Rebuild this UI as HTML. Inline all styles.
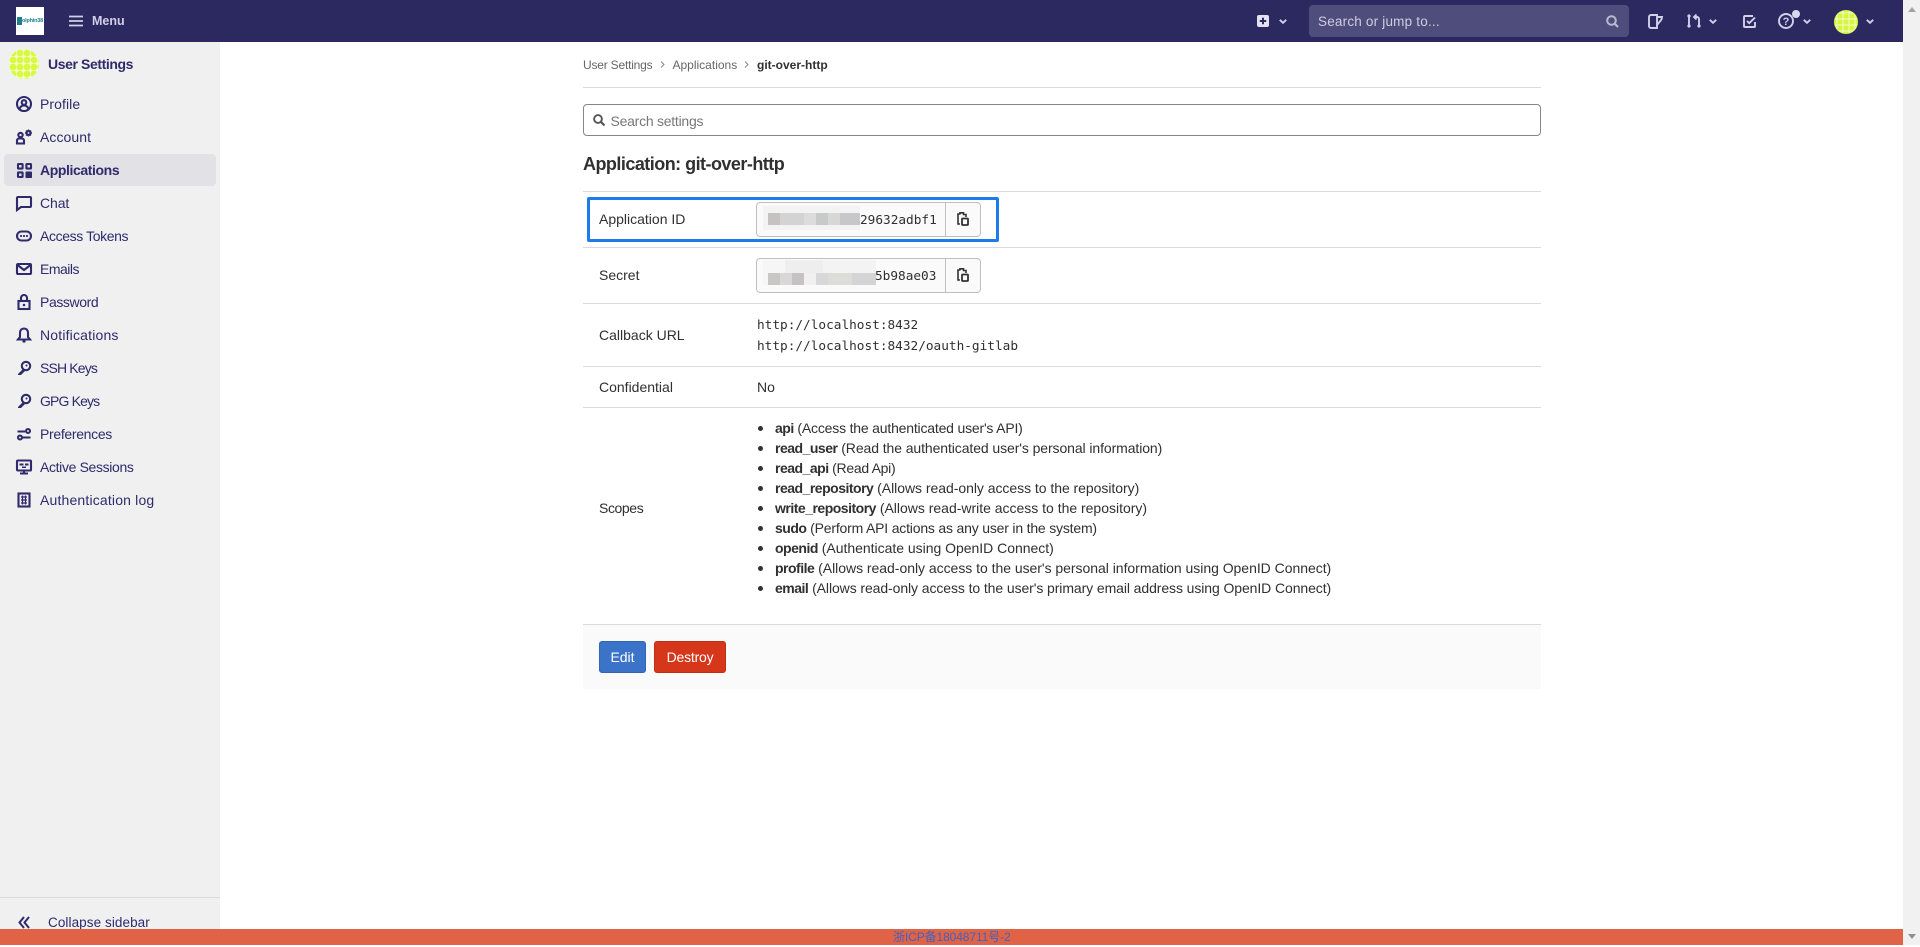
<!DOCTYPE html>
<html lang="en"><head><meta charset="utf-8"><title>git-over-http</title>
<style>
*{box-sizing:border-box}
html,body{margin:0;padding:0;width:1920px;height:945px;overflow:hidden;background:#fff;font-family:"Liberation Sans","Noto Sans CJK SC",sans-serif;font-size:14px;color:#303030}
.a{position:absolute}
.t{position:absolute;white-space:nowrap;line-height:20px;height:20px}
.m{font-family:"DejaVu Sans Mono","Liberation Mono",monospace;font-size:12.75px;color:#303030}
.hr{position:absolute;left:583px;width:958px;height:1px;background:#dbdbdb}
.nav{color:#2f2a6b;left:40px}
svg{position:absolute;display:block;overflow:visible}
.i{fill:none;stroke:#2f2a6b;stroke-width:2.1}
.n{fill:none;stroke:#d1d0e9;stroke-width:1.9}
.field{position:absolute;left:756px;width:225px;height:35px;border:1px solid #bfbfbf;border-radius:4px;background:#fafafa}
.field:after{content:"";position:absolute;left:188px;top:0;bottom:0;width:1px;background:#bfbfbf}
.b{position:absolute}
.s{left:775px;letter-spacing:-.09px}
.s b{letter-spacing:-.5px}
.d{position:absolute;left:758px;width:5px;height:5px;border-radius:50%;background:#303030}
</style></head><body>

<!-- navbar -->
<div class="a" style="left:0;top:0;width:1903px;height:42px;background:#2b2960"></div>
<div class="a" style="left:16px;top:7px;width:28px;height:28px;background:#fff;overflow:hidden"><div class="a" style="left:1px;top:10px;width:5px;height:8px;background:#1f7f8f"></div><span class="a" style="left:6px;top:9px;font-size:5.500px;line-height:10px;font-weight:bold;color:#1f7f8f;letter-spacing:-.2px;white-space:nowrap">olphin38</span></div>
<svg style="left:69px;top:14px" width="14" height="14" viewBox="0 0 14 14"><path d="M0 2.500h14M0 7h14M0 11.500h14" stroke="#d1d0e9" stroke-width="1.800"/></svg>
<div class="t" style="left:92px;top:11px;color:#d1d0e9;font-weight:bold;font-size:12.500px">Menu</div>

<svg style="left:1257px;top:15px" width="12" height="12" viewBox="0 0 12 12"><rect width="12" height="12" rx="2" fill="#e3e2f2"/><path d="M6 2.800v6.400M2.800 6h6.400" stroke="#2b2960" stroke-width="2"/></svg>
<svg style="left:1279px;top:19px" width="8" height="5" viewBox="0 0 8 5"><path d="M.8.800 4 3.800 7.200.800" class="n"/></svg>
<div class="a" style="left:1309px;top:5px;width:320px;height:32px;border-radius:4px;background:#4f4d7c"></div>
<div class="t" style="left:1318px;top:12px;color:#cfcee0;font-size:13.500px;letter-spacing:.2px">Search or jump to...</div>
<svg style="left:1606px;top:15px" width="13" height="13" viewBox="0 0 13 13"><circle cx="5.500" cy="5.500" r="4.300" fill="none" stroke="#b9b8d0" stroke-width="2"/><path d="M8.700 8.700 12 12" stroke="#b9b8d0" stroke-width="2.200"/></svg>
<svg style="left:1648px;top:14px" width="15" height="15" viewBox="0 0 15 15"><path d="M3 1h6v13H3a2 2 0 0 1-2-2V3a2 2 0 0 1 2-2zM9 3h5l-.5 2.500L9 11" class="n"/></svg>
<svg style="left:1686px;top:13px" width="16" height="16" viewBox="0 0 16 16"><path d="M3 3v10M13 12V6a2 2 0 0 0-2-2H9M10.500 1.500 8 4l2.500 2.500" class="n"/><circle cx="3" cy="3" r="1.600" fill="#d1d0e9"/><circle cx="3" cy="13" r="1.600" fill="#d1d0e9"/><circle cx="13" cy="13" r="1.600" fill="#d1d0e9"/></svg>
<svg style="left:1709px;top:19px" width="8" height="5" viewBox="0 0 8 5"><path d="M.8.800 4 3.800 7.200.800" class="n"/></svg>
<svg style="left:1743px;top:15px" width="13" height="13" viewBox="0 0 13 13"><path d="M10 1H1.800a.8.800 0 0 0-.8.800v9.400a.8.800 0 0 0 .8.800h9.400a.8.800 0 0 0 .8-.8V7" class="n"/><path d="M4 6l2.200 2.200L12 2.500" class="n"/></svg>
<svg style="left:1778px;top:13px" width="16" height="16" viewBox="0 0 16 16"><circle cx="8" cy="8" r="7" class="n"/><text x="8" y="12" text-anchor="middle" font-size="11" font-weight="bold" fill="#d1d0e9" font-family="Liberation Sans">?</text></svg>
<div class="a" style="left:1792px;top:10px;width:8px;height:8px;border-radius:50%;background:#d8d7ee"></div>
<svg style="left:1803px;top:19px" width="8" height="5" viewBox="0 0 8 5"><path d="M.8.800 4 3.800 7.200.800" class="n"/></svg>
<svg style="left:1834px;top:10px" width="24" height="24" viewBox="0 0 24 24"><defs><pattern id="p2" width="6" height="6" patternUnits="userSpaceOnUse"><rect width="6" height="6" fill="#d6f53c"/><path d="M2.500 0h1v6h-1zM0 2.500h6v1H0z" fill="#f4fbd0"/></pattern></defs><circle cx="12" cy="12" r="12" fill="url(#p2)"/></svg>
<svg style="left:1866px;top:19px" width="8" height="5" viewBox="0 0 8 5"><path d="M.8.800 4 3.800 7.200.800" class="n"/></svg>

<!-- scrollbar -->
<div class="a" style="left:1903px;top:0;width:17px;height:945px;background:#f1f1f1"></div>
<svg style="left:1908px;top:7px" width="8" height="5" viewBox="0 0 8 5"><path d="M4 0 8 5H0z" fill="#a3a3a3"/></svg>
<svg style="left:1908px;top:934px" width="8" height="5" viewBox="0 0 8 5"><path d="M0 0h8L4 5z" fill="#8f8f8f"/></svg>

<!-- sidebar -->
<div class="a" style="left:0;top:42px;width:220px;height:887px;background:#f0f0f0"></div>
<svg style="left:9px;top:49px" width="30" height="30" viewBox="0 0 30 30"><defs><pattern id="p1" x="0.500" y="0.500" width="7" height="7" patternUnits="userSpaceOnUse"><rect width="7" height="7" fill="#f3fbc8"/><circle cx="3.500" cy="3.500" r="3.300" fill="#d8fa3c"/></pattern></defs><circle cx="15" cy="15" r="15" fill="url(#p1)"/></svg>
<div class="t" style="left:48px;top:54px;color:#2f2a6b;font-weight:bold;font-size:14px;letter-spacing:-.4px">User Settings</div>

<div class="a" style="left:4px;top:154px;width:212px;height:32px;border-radius:4px;background:#e1e1e6"></div>

<svg style="left:16px;top:96px" width="16" height="16" viewBox="0 0 16 16"><circle cx="8" cy="8" r="7" class="i"/><circle cx="8" cy="6.500" r="2.300" class="i"/><path d="M3.500 13c.8-2.500 2.500-3.500 4.500-3.500s3.700 1 4.500 3.500" class="i"/></svg>
<div class="t nav" style="top:94px;letter-spacing:.07px">Profile</div>

<svg style="left:16px;top:129px" width="16" height="16" viewBox="0 0 16 16"><circle cx="4.500" cy="6" r="2.200" class="i"/><path d="M1 14.500v-3a2 2 0 0 1 2-2h3a2 2 0 0 1 2 2v3z" class="i"/><circle cx="12.500" cy="4" r="2" fill="none" stroke="#2f2a6b" stroke-width="2.200"/><path d="M12.500 .5v1M12.500 6.500v1M9 4h1M15 4h1M10 1.500l.7.7M14.300 5.800l.7.7M15 1.500l-.7.7M10.700 5.800l-.7.7" stroke="#2f2a6b" stroke-width="1.300"/></svg>
<div class="t nav" style="top:127px;letter-spacing:.07px">Account</div>

<svg style="left:17px;top:163px" width="15" height="15" viewBox="0 0 15 15"><g class="i"><rect x="1" y="1" width="4.600" height="4.600" rx=".6"/><rect x="9.400" y="1" width="4.600" height="4.600" rx=".6"/><rect x="1" y="9.400" width="4.600" height="4.600" rx=".6"/></g><rect x="8.500" y="8.500" width="6.500" height="6.500" rx=".8" fill="#2f2a6b"/></svg>
<div class="t nav" style="top:160px;font-weight:bold;letter-spacing:-.4px">Applications</div>

<svg style="left:16px;top:195px" width="16" height="16" viewBox="0 0 16 16"><path d="M2 2h12a1 1 0 0 1 1 1v8a1 1 0 0 1-1 1H5l-4 3V3a1 1 0 0 1 1-1z" class="i"/></svg>
<div class="t nav" style="top:193px;letter-spacing:-.1px">Chat</div>

<svg style="left:16px;top:228px" width="16" height="16" viewBox="0 0 16 16"><rect x="1" y="3.500" width="14" height="9" rx="4.500" class="i"/><circle cx="5" cy="8" r="1.100" fill="#2f2a6b"/><circle cx="8" cy="8" r="1.100" fill="#2f2a6b"/><circle cx="11" cy="8" r="1.100" fill="#2f2a6b"/></svg>
<div class="t nav" style="top:226px;letter-spacing:-.38px">Access Tokens</div>

<svg style="left:16px;top:261px" width="16" height="16" viewBox="0 0 16 16"><rect x="1" y="3" width="14" height="10" rx="1" class="i"/><path d="M1.500 4 8 9l6.500-5" class="i"/></svg>
<div class="t nav" style="top:259px;letter-spacing:-.5px">Emails</div>

<svg style="left:16px;top:294px" width="16" height="16" viewBox="0 0 16 16"><rect x="2.500" y="7" width="11" height="8" class="i"/><path d="M5 7V4a3 3 0 0 1 6 0v3" class="i"/><circle cx="8" cy="11" r="1.300" fill="#2f2a6b"/></svg>
<div class="t nav" style="top:292px;letter-spacing:-.4px">Password</div>

<svg style="left:16px;top:327px" width="16" height="16" viewBox="0 0 16 16"><path d="M8 1.500a4 4 0 0 0-4 4V10l-2 2.500h12L12 10V5.500a4 4 0 0 0-4-4z" class="i"/><path d="M6.500 14.500h3" class="i"/></svg>
<div class="t nav" style="top:325px;letter-spacing:.18px">Notifications</div>

<svg style="left:16px;top:360px" width="16" height="16" viewBox="0 0 16 16"><circle cx="10" cy="6" r="4.200" class="i"/><circle cx="10.500" cy="5.500" r="1" fill="#2f2a6b"/><path d="M7 9 2 14v1h3l4-4" fill="#2f2a6b"/></svg>
<div class="t nav" style="top:358px;letter-spacing:-.85px">SSH Keys</div>

<svg style="left:16px;top:393px" width="16" height="16" viewBox="0 0 16 16"><circle cx="10" cy="6" r="4.200" class="i"/><circle cx="10.500" cy="5.500" r="1" fill="#2f2a6b"/><path d="M7 9 2 14v1h3l4-4" fill="#2f2a6b"/></svg>
<div class="t nav" style="top:391px;letter-spacing:-.85px">GPG Keys</div>

<svg style="left:16px;top:426px" width="16" height="16" viewBox="0 0 16 16"><path d="M1.500 5.500H9M6.500 11.500h8" class="i"/><circle cx="12" cy="5" r="2" class="i"/><circle cx="4" cy="11.500" r="2" class="i"/></svg>
<div class="t nav" style="top:424px;letter-spacing:-.32px">Preferences</div>

<svg style="left:16px;top:459px" width="16" height="16" viewBox="0 0 16 16"><rect x="1" y="1.500" width="14" height="10" rx=".8" class="i"/><path d="M4 14.500h8M8 11.500v3" class="i"/><rect x="3.500" y="4.500" width="4" height="2" fill="#2f2a6b"/><rect x="9" y="4.500" width="3.500" height="2" fill="#2f2a6b"/><rect x="6" y="7.500" width="4" height="1.500" fill="#2f2a6b"/></svg>
<div class="t nav" style="top:457px;letter-spacing:-.35px">Active Sessions</div>

<svg style="left:16px;top:492px" width="16" height="16" viewBox="0 0 16 16"><rect x="2.500" y="1.500" width="11" height="13" class="i"/><path d="M5 5h6M5 8h6M5 11h6M6.500 3.500v9M9.500 3.500v9" stroke="#2f2a6b" stroke-width="1.200"/></svg>
<div class="t nav" style="top:490px;letter-spacing:.17px">Authentication log</div>

<div class="a" style="left:0;top:897px;width:220px;height:1px;background:#dcdcde"></div>
<svg style="left:17px;top:915px" width="14" height="14" viewBox="0 0 14 14"><path d="M7 2 2.500 7.500 7 13M12 2 7.500 7.500 12 13" fill="none" stroke="#2f2a6b" stroke-width="2"/></svg>
<div class="t" style="left:48px;top:913px;color:#2f2a6b;font-size:13.500px;letter-spacing:.08px">Collapse sidebar</div>

<!-- footer bar -->
<div class="a" style="left:0;top:929px;width:1903px;height:16px;background:#e06345"></div>
<div class="t" style="left:893px;top:927px;color:#3f62c4;font-size:12px;letter-spacing:-.1px">浙ICP备18048711号-2</div>

<!-- breadcrumbs -->
<div class="t" style="left:583px;top:55px;color:#666;font-size:12px;letter-spacing:-.2px">User Settings</div>
<svg style="left:660px;top:61px" width="5" height="7" viewBox="0 0 5 7"><path d="M1 .5 4 3.500 1 6.500" fill="none" stroke="#888" stroke-width="1"/></svg>
<div class="t" style="left:672.500px;top:55px;color:#666;font-size:12px">Applications</div>
<svg style="left:744px;top:61px" width="5" height="7" viewBox="0 0 5 7"><path d="M1 .5 4 3.500 1 6.500" fill="none" stroke="#888" stroke-width="1"/></svg>
<div class="t" style="left:757px;top:55px;color:#303030;font-size:12px;font-weight:bold">git-over-http</div>
<div class="hr" style="top:87px"></div>

<!-- search -->
<div class="a" style="left:583px;top:104px;width:958px;height:32px;border:1px solid #868686;border-radius:4px;background:#fff"></div>
<svg style="left:593px;top:114px" width="12" height="12" viewBox="0 0 12 12"><circle cx="5" cy="5" r="3.900" fill="none" stroke="#555" stroke-width="1.900"/><path d="M8 8 11.500 11.500" stroke="#555" stroke-width="2.100"/></svg>
<div class="t" style="left:610.500px;top:111px;color:#777;font-size:14px;letter-spacing:-.25px">Search settings</div>

<div class="t" style="left:583px;top:154px;color:#303030;font-size:18px;font-weight:bold;letter-spacing:-.53px">Application: git-over-http</div>

<div class="hr" style="top:191px"></div>
<div class="hr" style="top:247px"></div>
<div class="hr" style="top:303px"></div>
<div class="hr" style="top:366px"></div>
<div class="hr" style="top:407px"></div>
<div class="hr" style="top:624px"></div>

<!-- highlight box -->
<div class="a" style="left:587px;top:197px;width:412px;height:45px;border:3px solid #1e7bea;border-radius:2px"></div>

<div class="t" style="left:599px;top:209px">Application ID</div>
<div class="field" style="top:202px"></div>
<div class="b" style="left:763px;top:206px;width:97px;height:24px;background:#f3f3f3"></div>
<div class="b" style="left:768px;top:213px;width:92px;height:12px;background:linear-gradient(90deg,#c6c2c2 0 12px,#d3d3d3 12px 36px,#dcdcdc 36px 48px,#c8caca 48px 60px,#d7d7d5 60px 72px,#c7c7c9 72px 92px)"></div>
<div class="t m" style="left:860px;top:211px">29632adbf1</div>
<svg style="left:957px;top:212px" width="12" height="14" viewBox="0 0 12 14"><path d="M3 2H1v10h2" fill="none" stroke="#333" stroke-width="1.600"/><path d="M3 2.500V.8h3.500V2.500H9V5" fill="none" stroke="#333" stroke-width="1.600"/><rect x="5" y="6.500" width="6" height="6.500" rx=".6" fill="none" stroke="#333" stroke-width="1.800"/></svg>

<div class="t" style="left:599px;top:265px">Secret</div>
<div class="field" style="top:258px"></div>
<div class="b" style="left:763px;top:260px;width:113px;height:25px;background:linear-gradient(90deg,#f6f6f6 0 22px,#eeeeee 22px 60px,#f3f3f3 60px 113px)"></div>
<div class="b" style="left:768px;top:273px;width:108px;height:12px;background:linear-gradient(90deg,#c9c7c6 0 12px,#d8d8d8 12px 24px,#c4c2c2 24px 36px,#f0f0f0 36px 48px,#d8d8d8 48px 60px,#dcdcd8 60px 84px,#d4d4d4 84px 108px)"></div>
<div class="t m" style="left:875px;top:267px">5b98ae03</div>
<svg style="left:957px;top:268px" width="12" height="14" viewBox="0 0 12 14"><path d="M3 2H1v10h2" fill="none" stroke="#333" stroke-width="1.600"/><path d="M3 2.500V.8h3.500V2.500H9V5" fill="none" stroke="#333" stroke-width="1.600"/><rect x="5" y="6.500" width="6" height="6.500" rx=".6" fill="none" stroke="#333" stroke-width="1.800"/></svg>

<div class="t" style="left:599px;top:325px">Callback URL</div>
<div class="t m" style="left:757px;top:316px">http://localhost:8432</div>
<div class="t m" style="left:757px;top:337px">http://localhost:8432/oauth-gitlab</div>

<div class="t" style="left:599px;top:377px">Confidential</div>
<div class="t" style="left:757px;top:377px">No</div>

<div class="t" style="left:599px;top:498px;letter-spacing:-.4px">Scopes</div>
<div class="d" style="top:426px"></div>
<div class="t s" style="top:418px;letter-spacing:-.19px"><b>api</b> (Access the authenticated user's API)</div>
<div class="d" style="top:446px"></div>
<div class="t s" style="top:438px"><b>read_user</b> (Read the authenticated user's personal information)</div>
<div class="d" style="top:466px"></div>
<div class="t s" style="top:458px;letter-spacing:-.3px"><b>read_api</b> (Read Api)</div>
<div class="d" style="top:486px"></div>
<div class="t s" style="top:478px;letter-spacing:-.04px"><b>read_repository</b> (Allows read-only access to the repository)</div>
<div class="d" style="top:506px"></div>
<div class="t s" style="top:498px;letter-spacing:-.01px"><b>write_repository</b> (Allows read-write access to the repository)</div>
<div class="d" style="top:526px"></div>
<div class="t s" style="top:518px;letter-spacing:-.19px"><b>sudo</b> (Perform API actions as any user in the system)</div>
<div class="d" style="top:546px"></div>
<div class="t s" style="top:538px;letter-spacing:-.02px"><b>openid</b> (Authenticate using OpenID Connect)</div>
<div class="d" style="top:566px"></div>
<div class="t s" style="top:558px;letter-spacing:-.03px"><b>profile</b> (Allows read-only access to the user's personal information using OpenID Connect)</div>
<div class="d" style="top:586px"></div>
<div class="t s" style="top:578px"><b>email</b> (Allows read-only access to the user's primary email address using OpenID Connect)</div>

<!-- actions -->
<div class="a" style="left:583px;top:625px;width:958px;height:64px;background:#fafafa"></div>
<div class="a" style="left:599px;top:641px;width:47px;height:32px;border-radius:3px;background:#3a73c8;border:1px solid #2f66b5;color:#fff;text-align:center;line-height:30px">Edit</div>
<div class="a" style="left:654px;top:641px;width:72px;height:32px;border-radius:3px;background:#d6371a;border:1px solid #c02f14;color:#fff;text-align:center;line-height:30px;letter-spacing:-.2px">Destroy</div>

</body></html>
